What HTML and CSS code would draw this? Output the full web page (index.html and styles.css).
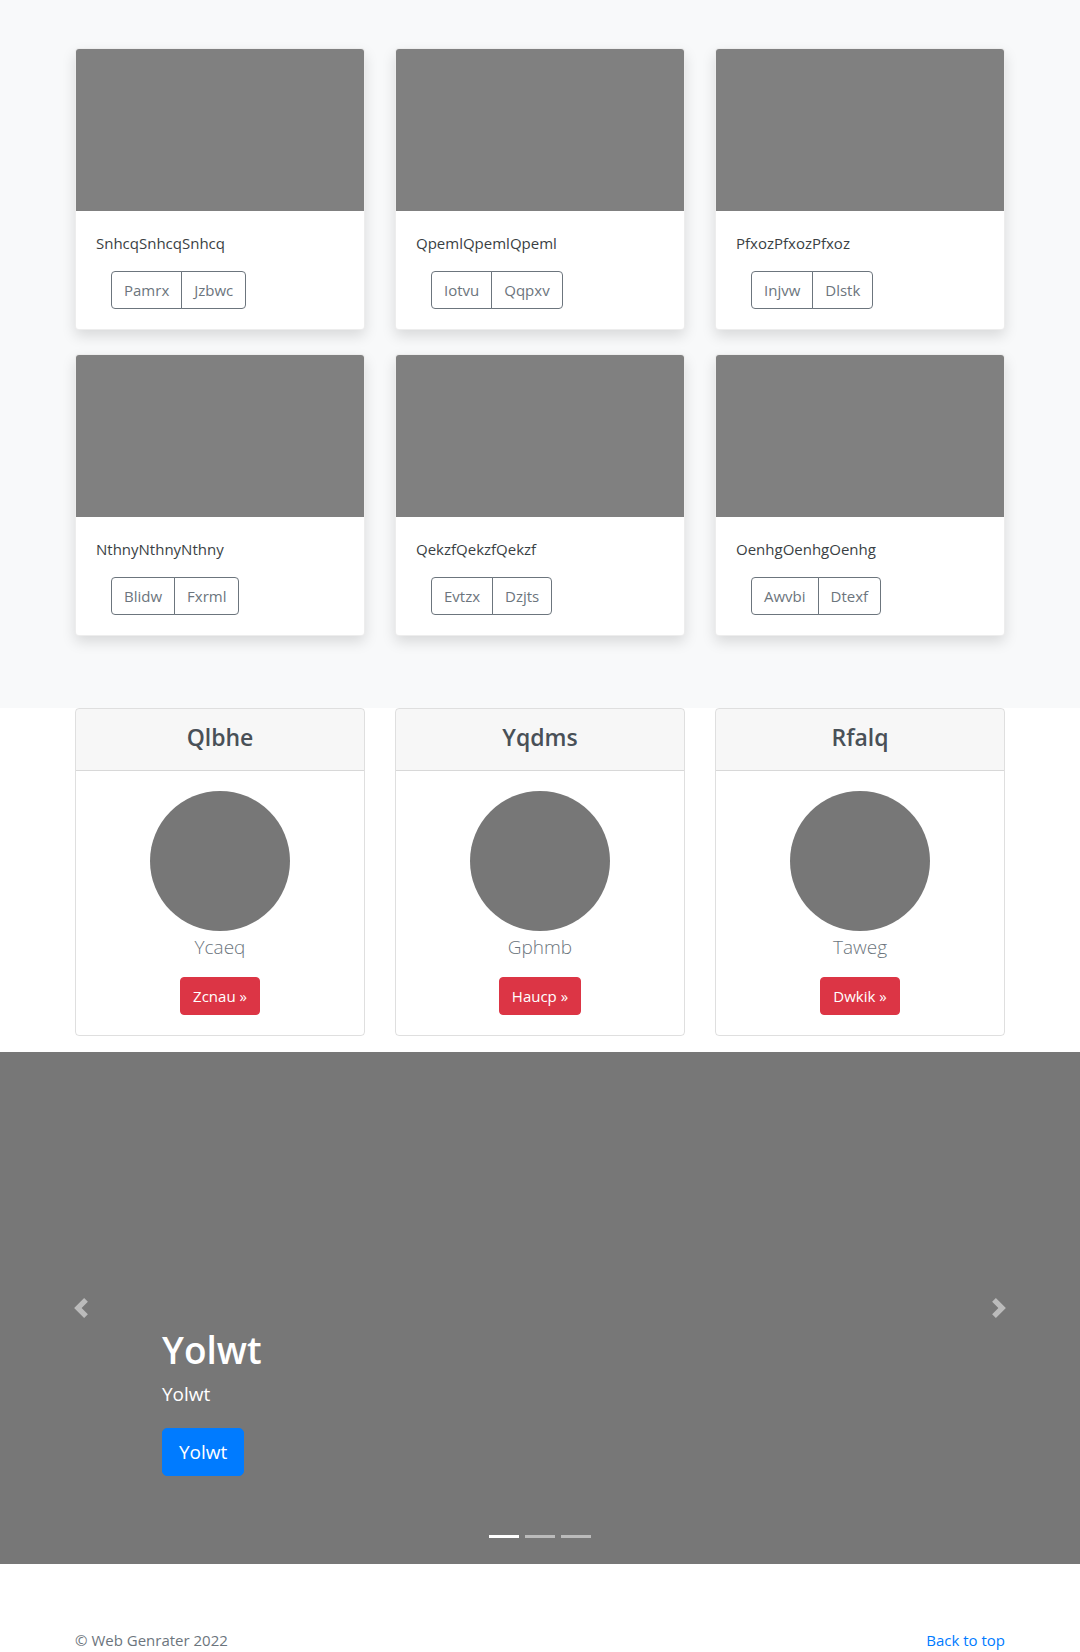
FILE: index.html
```html
<!DOCTYPE html>
<html lang="en">
<head>
<meta charset="utf-8">
<title>Album</title>
<link rel="stylesheet" href="styles.css">
</head>
<body>
<main>
  <section class="album">
    <div class="album-grid">
      <div class="card">
        <div class="card-img"></div>
        <div class="card-body">
          <p class="card-text">SnhcqSnhcqSnhcq</p>
          <div class="btn-group"><button class="btn-outline">Pamrx</button><button class="btn-outline">Jzbwc</button></div>
        </div>
      </div>
      <div class="card">
        <div class="card-img"></div>
        <div class="card-body">
          <p class="card-text">QpemlQpemlQpeml</p>
          <div class="btn-group"><button class="btn-outline">Iotvu</button><button class="btn-outline">Qqpxv</button></div>
        </div>
      </div>
      <div class="card">
        <div class="card-img"></div>
        <div class="card-body">
          <p class="card-text">PfxozPfxozPfxoz</p>
          <div class="btn-group"><button class="btn-outline">Injvw</button><button class="btn-outline">Dlstk</button></div>
        </div>
      </div>
      <div class="card">
        <div class="card-img"></div>
        <div class="card-body">
          <p class="card-text">NthnyNthnyNthny</p>
          <div class="btn-group"><button class="btn-outline">Blidw</button><button class="btn-outline">Fxrml</button></div>
        </div>
      </div>
      <div class="card">
        <div class="card-img"></div>
        <div class="card-body">
          <p class="card-text">QekzfQekzfQekzf</p>
          <div class="btn-group"><button class="btn-outline">Evtzx</button><button class="btn-outline">Dzjts</button></div>
        </div>
      </div>
      <div class="card">
        <div class="card-img"></div>
        <div class="card-body">
          <p class="card-text">OenhgOenhgOenhg</p>
          <div class="btn-group"><button class="btn-outline">Awvbi</button><button class="btn-outline">Dtexf</button></div>
        </div>
      </div>
    </div>
  </section>

  <section class="features">
    <div class="feat-grid">
      <div class="feat-card">
        <div class="feat-head"><h4>Qlbhe</h4></div>
        <div class="feat-body">
          <div class="avatar"></div>
          <p class="feat-name">Ycaeq</p>
          <a class="btn-red" href="#">Zcnau &raquo;</a>
        </div>
      </div>
      <div class="feat-card">
        <div class="feat-head"><h4>Yqdms</h4></div>
        <div class="feat-body">
          <div class="avatar"></div>
          <p class="feat-name">Gphmb</p>
          <a class="btn-red" href="#">Haucp &raquo;</a>
        </div>
      </div>
      <div class="feat-card">
        <div class="feat-head"><h4>Rfalq</h4></div>
        <div class="feat-body">
          <div class="avatar"></div>
          <p class="feat-name">Taweg</p>
          <a class="btn-red" href="#">Dwkik &raquo;</a>
        </div>
      </div>
    </div>
  </section>

  <section class="carousel">
    <div class="car-control car-prev">
      <svg width="20" height="20" viewBox="0 0 8 8"><path fill="#fff" d="M5.25 0l-4 4 4 4 1.5-1.5L4.25 4l2.5-2.5L5.25 0z"/></svg>
    </div>
    <div class="car-caption">
      <h1>Yolwt</h1>
      <p>Yolwt</p>
      <a class="btn-blue" href="#">Yolwt</a>
    </div>
    <div class="car-control car-next">
      <svg width="20" height="20" viewBox="0 0 8 8"><path fill="#fff" d="M2.75 0l-1.5 1.5L3.75 4l-2.5 2.5L2.75 8l4-4-4-4z"/></svg>
    </div>
    <ol class="car-indicators">
      <li class="active"></li>
      <li></li>
      <li></li>
    </ol>
  </section>
</main>

<footer class="footer">
  <p class="copy">&copy; Web Genrater 2022</p>
  <p><a href="#">Back to top</a></p>
</footer>
</body>
</html>
```

FILE: styles.css
```css
* { box-sizing: border-box; }

body {
  margin: 0;
  font-family: "Open Sans", "Noto Sans", "Liberation Sans", sans-serif;
  font-size: 15px;
  line-height: 24px;
  color: #212529;
  background: #fff;
}

/* Album */
.album {
  background: #f8f9fa;
  padding: 48px 0 72px;
}

.album-grid {
  width: 930px;
  margin: 0 auto;
  display: grid;
  grid-template-columns: repeat(3, 290px);
  column-gap: 30px;
  row-gap: 24px;
}

.card {
  background: #fff;
  border: 1px solid rgba(0, 0, 0, 0.07);
  border-radius: 4px;
  overflow: hidden;
  box-shadow: 0 6px 14px rgba(0, 0, 0, 0.13);
}

.card-img {
  height: 162px;
  background: #808080;
}

.card-body {
  padding: 20px;
}

.card-text {
  margin: 0 0 16px;
  color: #3a3f44;
}

.btn-group {
  display: inline-flex;
  margin-left: 15px;
}

.btn-outline {
  font-family: inherit;
  font-size: 15px;
  line-height: 24px;
  padding: 6px 12px;
  color: #6c757d;
  background: transparent;
  border: 1px solid #6c757d;
  border-radius: 0;
}

.btn-outline:first-child {
  border-radius: 4px 0 0 4px;
}

.btn-outline + .btn-outline {
  margin-left: -1px;
  border-radius: 0 4px 4px 0;
}

/* Features */
.features {
  padding-bottom: 16px;
}

.feat-grid {
  width: 930px;
  margin: 0 auto;
  display: grid;
  grid-template-columns: repeat(3, 1fr);
  column-gap: 30px;
}

.feat-card {
  border: 1px solid rgba(0, 0, 0, 0.125);
  border-radius: 4px;
  text-align: center;
  overflow: hidden;
}

.feat-head {
  background: rgba(0, 0, 0, 0.03);
  border-bottom: 1px solid rgba(0, 0, 0, 0.125);
  padding: 12px 20px 17px;
}

.feat-head h4 {
  margin: 0;
  font-size: 23px;
  line-height: 32px;
  font-weight: 600;
  color: #495057;
}

.feat-body {
  padding: 20px;
}

.avatar {
  width: 140px;
  height: 140px;
  border-radius: 50%;
  background: #777;
  margin: 0 auto;
}

.feat-name {
  margin: 1px 0 15px;
  font-size: 19px;
  line-height: 30px;
  font-weight: 300;
  color: #6c757d;
}

.btn-red {
  display: inline-block;
  padding: 6px 12px;
  font-size: 15px;
  line-height: 24px;
  color: #fff;
  background: #dc3545;
  border: 1px solid #dc3545;
  border-radius: 4px;
  text-decoration: none;
}

/* Carousel */
.carousel {
  position: relative;
  height: 512px;
  background: #777;
  margin-bottom: 64px;
}

.car-caption {
  position: absolute;
  left: 15%;
  right: 15%;
  bottom: 88px;
  color: #fff;
}

.car-caption h1 {
  margin: 0 0 5px;
  font-size: 37px;
  line-height: 48px;
  font-weight: 600;
}

.car-caption p {
  margin: 0 0 19px;
  font-size: 19px;
  line-height: 30px;
}

.btn-blue {
  display: inline-block;
  padding: 8px 16px;
  font-size: 19px;
  line-height: 30px;
  color: #fff;
  background: #007bff;
  border: 1px solid #007bff;
  border-radius: 5px;
  text-decoration: none;
}

.car-control {
  position: absolute;
  top: 0;
  bottom: 0;
  width: 15%;
  display: flex;
  align-items: center;
  justify-content: center;
  opacity: 0.5;
}

.car-prev { left: 0; }
.car-next { right: 0; }

.car-indicators {
  position: absolute;
  left: 0;
  right: 0;
  bottom: 26px;
  margin: 0;
  padding: 0;
  list-style: none;
  display: flex;
  justify-content: center;
}

.car-indicators li {
  width: 30px;
  height: 3px;
  margin: 0 3px;
  background: #fff;
  opacity: 0.5;
}

.car-indicators li.active {
  opacity: 1;
}

/* Footer */
.footer {
  width: 930px;
  margin: 0 auto;
  padding-bottom: 48px;
  display: flex;
  justify-content: space-between;
}

.footer p {
  margin: 0 0 16px;
}

.copy {
  color: #6c757d;
}

.footer a {
  color: #007bff;
  text-decoration: none;
}
```
